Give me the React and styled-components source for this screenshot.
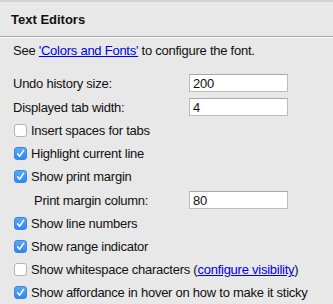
import styled, { createGlobalStyle } from "styled-components"

const GlobalStyle = createGlobalStyle`
  html, body {
    margin: 0;
    padding: 0;
    background: #e8e8e8;
  }
  body {
    font-family: "Liberation Sans", Arial, sans-serif;
    font-size: 13px;
    letter-spacing: -0.25px;
    color: #111;
  }
`

const Panel = styled.div`
  width: 333px;
  height: 304px;
  background: #e8e8e8;
  border-top: 2px solid #d2d2d2;
  box-sizing: border-box;
  overflow: hidden;
`
const Header = styled.div`
  height: 34px;
  display: flex;
  align-items: center;
  padding-left: 11px;
  font-weight: bold;
  font-size: 13px;
  letter-spacing: 0;
  border-bottom: 1px solid #a6a6a6;
  box-shadow: 0 1px 0 #fafafa;
`
const Body = styled.div`
  padding: 6px 0 0 13px;
`
const Note = styled.div`
  height: 16px;
  line-height: 16px;
  margin-bottom: 12px;
`
const Link = styled.a`
  color: #0000ee;
  text-decoration: underline;
  cursor: pointer;
`
const FieldRow = styled.div`
  width: 275px;
  height: 24px;
  display: flex;
  align-items: center;
  padding-left: ${p => p.indent || 0}px;
  box-sizing: border-box;
`
const Label = styled.span`
  flex: 1;
`
const Input = styled.input`
  width: 99px;
  height: 18px;
  box-sizing: border-box;
  border: 1px solid #bcbcbc;
  border-top-color: #a8a8a8;
  background: #fff;
  padding: 0 3px;
  font-family: inherit;
  font-size: 13px;
  letter-spacing: inherit;
  color: #111;
  outline: none;
`
const CheckRow = styled.label`
  height: 23px;
  display: flex;
  align-items: center;
  gap: 4px;
  white-space: nowrap;
`
const Box = styled.span`
  width: 13px;
  height: 13px;
  margin-left: 1px;
  box-sizing: border-box;
  border-radius: 3px;
  display: flex;
  align-items: center;
  justify-content: center;
  background: ${p => (p.checked ? "linear-gradient(#5aa8f8, #2f88f1)" : "#fff")};
  border: 1px solid ${p => (p.checked ? "#3a86e0" : "#b3b3b3")};
`

const Check = ({ checked }) => (
  <Box checked={checked}>
    {checked && (
      <svg width="9" height="9" viewBox="0 0 9 9">
        <path d="M1.6 4.8 L3.6 7.2 L7.6 1.4" fill="none" stroke="#fff" strokeWidth="1.5" strokeLinecap="round" strokeLinejoin="round" />
      </svg>
    )}
  </Box>
)

const Option = ({ checked, children }) => (
  <CheckRow>
    <Check checked={checked} />
    <span>{children}</span>
  </CheckRow>
)

const App = () => {
  return (
    <>
      <GlobalStyle />
      <Panel>
        <Header>Text Editors</Header>
        <Body>
          <Note>
            See <Link>'Colors and Fonts'</Link> to configure the font.
          </Note>
          <FieldRow>
            <Label>Undo history size:</Label>
            <Input defaultValue="200" />
          </FieldRow>
          <FieldRow>
            <Label>Displayed tab width:</Label>
            <Input defaultValue="4" />
          </FieldRow>
          <Option>Insert spaces for tabs</Option>
          <Option checked>Highlight current line</Option>
          <Option checked>Show print margin</Option>
          <FieldRow indent={21}>
            <Label>Print margin column:</Label>
            <Input defaultValue="80" />
          </FieldRow>
          <Option checked>Show line numbers</Option>
          <Option checked>Show range indicator</Option>
          <Option>
            Show whitespace characters (<Link>configure visibility</Link>)
          </Option>
          <Option checked>Show affordance in hover on how to make it sticky</Option>
        </Body>
      </Panel>
    </>
  )
}

export default App
